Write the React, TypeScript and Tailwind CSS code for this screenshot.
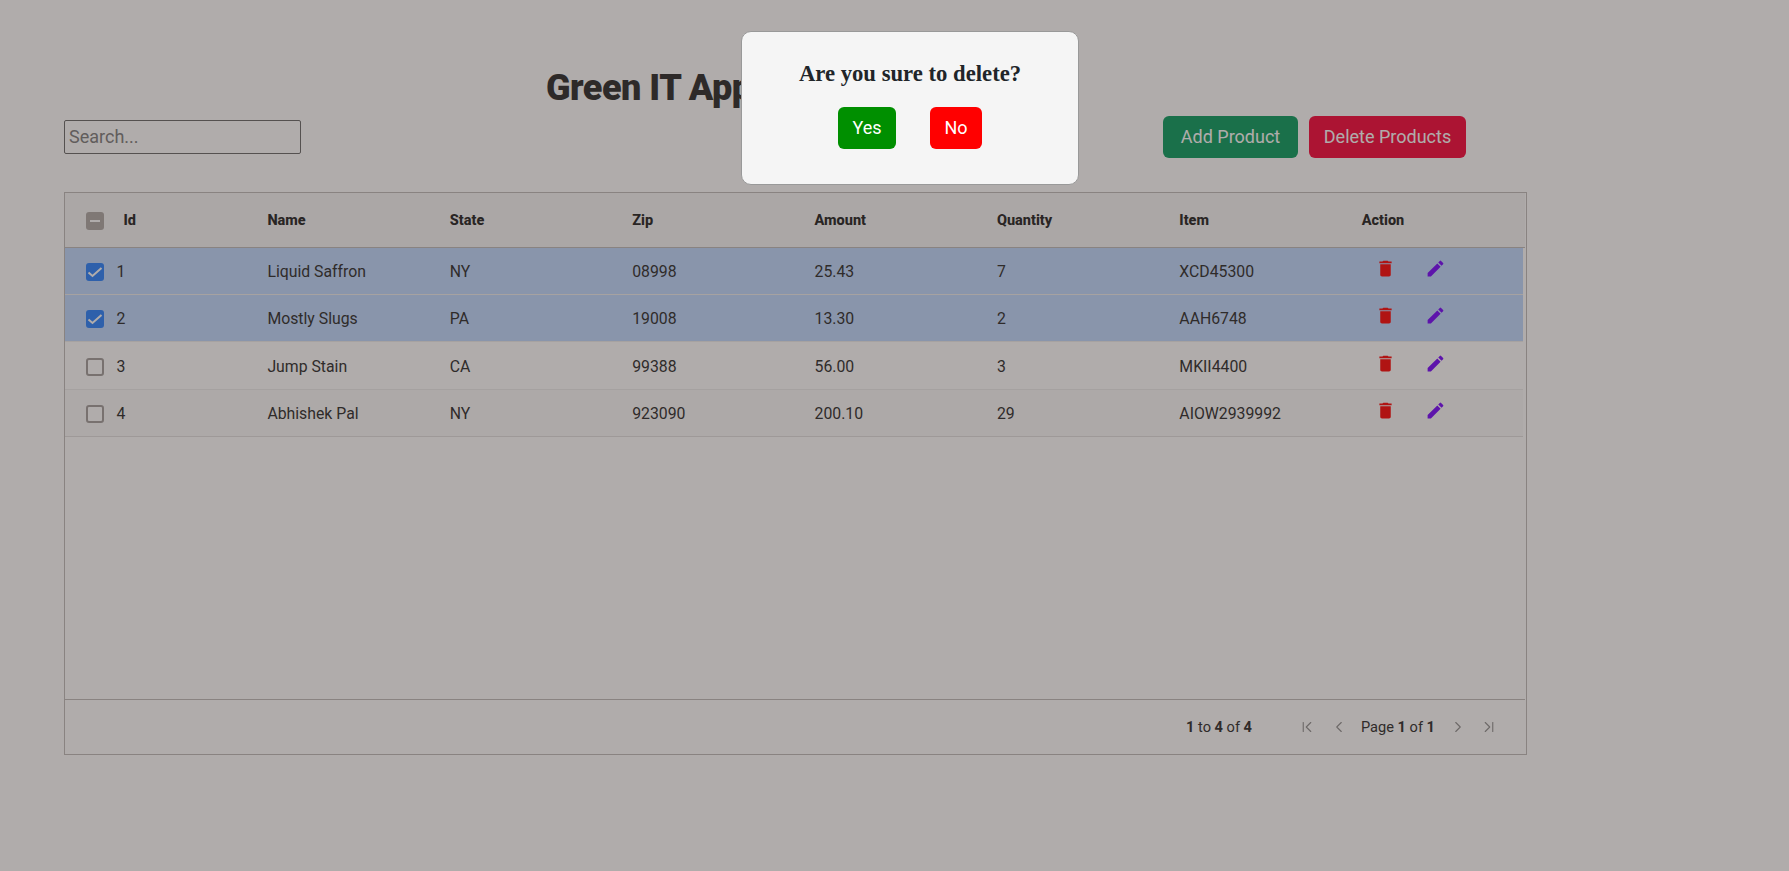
import React from 'react';
import { ChevronFirst, ChevronLast, ChevronLeft, ChevronRight } from 'lucide-react';

const rows = [
  { id: 1, name: 'Liquid Saffron', state: 'NY', zip: '08998', amount: '25.43', qty: 7, item: 'XCD45300', selected: true },
  { id: 2, name: 'Mostly Slugs', state: 'PA', zip: '19008', amount: '13.30', qty: 2, item: 'AAH6748', selected: true },
  { id: 3, name: 'Jump Stain', state: 'CA', zip: '99388', amount: '56.00', qty: 3, item: 'MKII4400', selected: false },
  { id: 4, name: 'Abhishek Pal', state: 'NY', zip: '923090', amount: '200.10', qty: 29, item: 'AIOW2939992', selected: false },
];

const columns = ['Name', 'State', 'Zip', 'Amount', 'Quantity', 'Item', 'Action'];

const TrashIcon = () => (
  <svg width="21" height="21" viewBox="0 0 24 24" className="fill-[#ff1919]">
    <path d="M6 19c0 1.1.9 2 2 2h8c1.1 0 2-.9 2-2V7H6v12zM19 4h-3.5l-1-1h-5l-1 1H5v2h14V4z" />
  </svg>
);

const PenIcon = () => (
  <svg width="21" height="21" viewBox="0 0 24 24" className="fill-[#8119ff]">
    <path d="M3 17.25V21h3.75L17.81 9.94l-3.75-3.75L3 17.25zM20.71 7.04c.39-.39.39-1.02 0-1.41l-2.34-2.34a.9959.9959 0 0 0-1.41 0l-1.83 1.83 3.75 3.75 1.83-1.83z" />
  </svg>
);

const Checkbox = ({ checked }: { checked: boolean }) =>
  checked ? (
    <span className="flex h-[18px] w-[18px] shrink-0 items-center justify-center rounded-[3px] bg-[#3a8cff]">
      <svg width="18" height="18" viewBox="0 0 18 18" fill="none" stroke="white" strokeWidth="2">
        <path d="M2.5 9.5l4 3.5L15.5 5" />
      </svg>
    </span>
  ) : (
    <span className="h-[18px] w-[18px] shrink-0 rounded-[3px] border-2 border-[#aaa6a4] bg-white" />
  );

const App = () => {
  return (
    <div className="relative h-[871px] overflow-hidden bg-white font-[Roboto,sans-serif] text-[#3c3c3c]">
      <div className="px-16 pt-[64px]">
        <h1 className="ml-[482px] h-[52px] whitespace-nowrap text-[36px] leading-[48px] font-black tracking-[-0.5px] text-[#3a3a3a]">
          Green IT App
        </h1>
        <div className="flex h-[76px] items-start">
          <input
            placeholder="Search..."
            className="mt-[4px] h-[34px] w-[237px] rounded-[2px] border border-[#767676] px-[4px] pb-[2px] text-[18px] placeholder:text-[#888] outline-none"
          />
          <div className="ml-[862px] flex gap-[11px] text-[18px] text-white">
            <button className="h-[42px] w-[135px] rounded-[6px] bg-[#1ca56d] pb-[2px]">Add Product</button>
            <button className="h-[42px] w-[157px] rounded-[6px] bg-[#f9194a] pb-[2px]">Delete Products</button>
          </div>
        </div>

        <div className="flex h-[563px] w-[1463px] flex-col border border-[#c4c1c0]">
          <div className="mr-[1px] grid h-[55px] shrink-0 grid-cols-[repeat(8,182.4px)] items-center overflow-hidden border-b border-[#c4c1c0] bg-[#f8f8f8] pt-[1px] text-[14.5px] font-extrabold text-[#333]">
            <div className="flex items-center gap-5 pl-[20.5px]">
              <span className="flex h-[18px] w-[18px] items-center justify-center rounded-[3px] bg-[#b5b0ae]">
                <span className="h-[2px] w-[10px] bg-white" />
              </span>
              <span>Id</span>
            </div>
            {columns.map((c) => (
              <div key={c} className="pl-5">{c}</div>
            ))}
          </div>

          <div className="flex-1 pr-[3px]">
            {rows.map((r) => (
              <div
                key={r.id}
                className={`grid grid-cols-[repeat(8,182.4px)] items-center overflow-hidden border-b pt-[2px] text-[15.8px] ${
                  r.id === 3 ? 'h-[48px]' : 'h-[47px]'
                } ${
                  r.selected
                    ? 'border-[#f0f0f0] bg-[#c4dcff]'
                    : r.id % 2 === 0
                      ? 'border-[#e4e2e2] bg-[#fbfbfb]'
                      : 'border-[#efefef] bg-white'
                }`}
              >
                <div className="flex items-center gap-[13px] pl-[20.5px]">
                  <Checkbox checked={r.selected} />
                  <span>{r.id}</span>
                </div>
                <div className="pl-5">{r.name}</div>
                <div className="pl-5">{r.state}</div>
                <div className="pl-5">{r.zip}</div>
                <div className="pl-5">{r.amount}</div>
                <div className="pl-5">{r.qty}</div>
                <div className="pl-5">{r.item}</div>
                <div className="flex gap-[29px] pb-[7px] pl-[33px]">
                  <TrashIcon />
                  <PenIcon />
                </div>
              </div>
            ))}
          </div>

          <div className="mr-[1px] flex h-[55px] shrink-0 items-center border-t border-[#c4c1c0] pt-[1px] text-[14.6px]">
            <span className="ml-[1121px] whitespace-nowrap">
              <b>1</b> to <b>4</b> of <b>4</b>
            </span>
            <div className="ml-[46px] flex items-center text-[#9a9a9a]">
              <ChevronFirst size={18} strokeWidth={1.5} />
              <ChevronLeft size={18} strokeWidth={1.5} className="ml-[14px]" />
              <span className="mr-[14px] ml-[13px] whitespace-nowrap text-[#3c3c3c]">
                Page <b>1</b> of <b>1</b>
              </span>
              <ChevronRight size={18} strokeWidth={1.5} />
              <ChevronLast size={18} strokeWidth={1.5} className="ml-[13px]" />
            </div>
          </div>
        </div>
      </div>

      {/* dim layer and confirm dialog */}
      <div className="fixed inset-0 bg-[rgba(23,12,9,0.34)]">
        <div className="absolute top-[31px] left-[741px] flex h-[154px] w-[338px] flex-col items-center rounded-[10px] border border-[#999] bg-[#f5f5f5]">
          <h2 className="mt-[24px] font-['Liberation_Serif',serif] text-[22.7px] leading-[36px] font-bold text-[#212529]">
            Are you sure to delete?
          </h2>
          <div className="mt-[15px] flex gap-[34px] text-[18px] text-white">
            <button className="h-[42px] w-[58px] rounded-[6px] bg-[#008f00] pb-[2px]">Yes</button>
            <button className="h-[42px] w-[52px] rounded-[6px] bg-[#ff0000] pb-[2px]">No</button>
          </div>
        </div>
      </div>
    </div>
  );
};

export default App;
